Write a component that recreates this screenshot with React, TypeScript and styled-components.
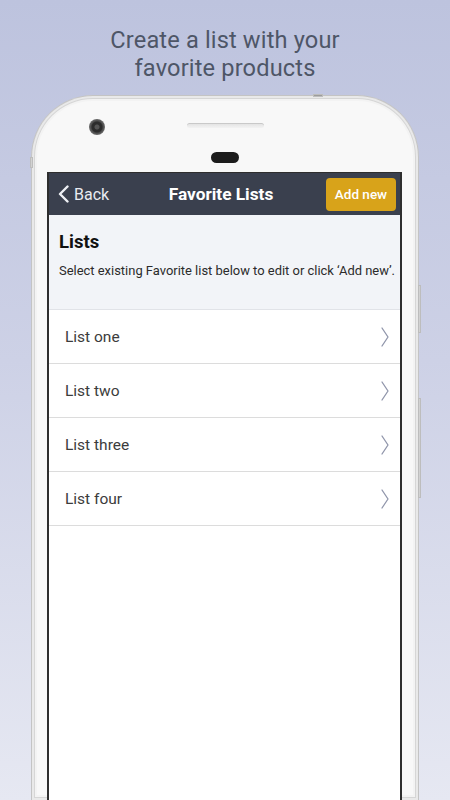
import React from "react";
import styled, { createGlobalStyle } from "styled-components";

const Global = createGlobalStyle`
  html, body { margin: 0; padding: 0; }
  body { font-family: Roboto, "Liberation Sans", Arial, sans-serif; }
  * { box-sizing: border-box; }
`;

const Page = styled.div`
  width: 450px;
  height: 800px;
  overflow: hidden;
  background: linear-gradient(180deg, #bdc3de 0%, #cdd1e6 45%, #e6e8f2 100%);
  display: flex;
  flex-direction: column;
`;

const Title = styled.h1`
  margin: 0;
  padding-top: 26px;
  font-family: Roboto, "Liberation Sans", sans-serif;
  font-weight: 400;
  font-size: 23.6px;
  letter-spacing: 0.15px;
  line-height: 28px;
  color: #4e5667;
  text-align: center;
`;

const Phone = styled.div`
  position: relative;
  margin: 13px 0 0 31px;
  width: 388px;
  flex: 1;
  background: #f8f8f8;
  border: 1px solid #c4c4c4;
  border-bottom: none;
  border-radius: 62px 62px 0 0;
  box-shadow: inset 0 0 0 2px #e9e9e9, inset 0 0 0 3px #d6d6d6, inset 0 0 0 5px #f3f3f3;
  display: flex;
  flex-direction: column;
`;

const SideKey = styled.span<{ $side: "left" | "right" | "top"; $at: number; $len: number }>`
  position: absolute;
  background: #d2d2d2;
  border: 1px solid #bdbdbd;
  ${(p) =>
    p.$side === "top"
      ? `top: -2px; left: ${p.$at}px; width: ${p.$len}px; height: 3px; background:#9c9c9c;`
      : p.$side === "left"
      ? `left: -2px; top: ${p.$at}px; height: ${p.$len}px; width: 3px;`
      : `right: -3px; top: ${p.$at}px; height: ${p.$len}px; width: 3px;`}
`;

const Bezel = styled.div`
  position: relative;
  height: 76px;
  display: flex;
  flex-direction: column;
  align-items: center;
`;

const Camera = styled.span`
  position: absolute;
  left: 57px;
  top: 23px;
  width: 16px;
  height: 16px;
  border-radius: 50%;
  background: radial-gradient(circle at 50% 50%, #555 0 2px, #2c2c2c 3px 5px, #4a4a4a 6px, #6d6d6d 8px);
`;

const Speaker = styled.span`
  margin-top: 27px;
  width: 77px;
  height: 5px;
  border-radius: 3px;
  border-top: 1.5px solid #c9c9c9;
  background: linear-gradient(180deg, #e4e4e4, #f3f3f3);
`;

const Sensor = styled.span`
  margin-top: 24px;
  width: 28px;
  height: 11px;
  border-radius: 6px;
  background: #1c1c1c;
`;

const Screen = styled.div`
  margin-left: 15px;
  width: 355px;
  flex: 1;
  background: #fff;
  border: 2px solid #2e2e2e;
  border-top-width: 1px;
  border-bottom: none;
  display: flex;
  flex-direction: column;
`;

const NavBar = styled.header`
  height: 42px;
  background: #3a404e;
  display: grid;
  grid-template-columns: 1fr auto 1fr;
  align-items: center;
  padding: 0 4px 0 9px;
`;

const BackButton = styled.div`
  display: flex;
  align-items: center;
  gap: 5px;
  color: #e9ebf1;
  font-size: 16px;
  justify-self: start;
`;

const NavTitle = styled.div`
  color: #fff;
  font-weight: 700;
  font-size: 17.3px;
  margin-right: 12px;
`;

const AddButton = styled.button`
  justify-self: end;
  width: 70px;
  height: 33px;
  border: none;
  border-radius: 4px;
  background: #d8a31a;
  color: #fff;
  font-family: Roboto, "Liberation Sans", sans-serif;
  font-weight: 500;
  font-size: 13.5px;
  padding: 0;
`;

const Intro = styled.section`
  background: #f2f4f8;
  height: 95px;
  padding: 16px 10px 0 10px;
  border-bottom: 1px solid #e1e3e8;
`;

const IntroHeading = styled.h2`
  margin: 0;
  font-size: 18.5px;
  line-height: 22px;
  font-weight: 700;
  color: #111;
`;

const IntroText = styled.p`
  margin: 10px 0 0;
  font-size: 12.95px;
  line-height: 16px;
  color: #2b2b2b;
  white-space: nowrap;
`;

const List = styled.ul`
  list-style: none;
  margin: 0;
  padding: 0;
`;

const Row = styled.li`
  height: 54px;
  border-bottom: 1px solid #dcdcdc;
  display: flex;
  align-items: center;
  justify-content: space-between;
  padding: 0 11px 0 16px;
  font-size: 15.5px;
  color: #3c3c3c;
`;

const Chevron = ({ color, w, h, sw }: { color: string; w: number; h: number; sw: number }) => (
  <svg width={w} height={h} viewBox={`0 0 ${w} ${h}`} fill="none">
    <path d={`M1 1 L${w - 1} ${h / 2} L1 ${h - 1}`} stroke={color} strokeWidth={sw} strokeLinecap="round" strokeLinejoin="round" />
  </svg>
);

const BackChevron = () => (
  <svg width="11" height="18" viewBox="0 0 11 18" fill="none">
    <path d="M9.5 1.5 L2 9 L9.5 16.5" stroke="#eef0f5" strokeWidth="2.4" strokeLinecap="round" strokeLinejoin="round" />
  </svg>
);

const lists = ["List one", "List two", "List three", "List four"];

export default function App() {
  return (
    <>
      <Global />
      <Page>
        <Title>
          Create a list with your
          <br />
          favorite products
        </Title>
        <Phone>
          <SideKey $side="top" $at={281} $len={10} />
          <SideKey $side="left" $at={61} $len={11} />
          <SideKey $side="right" $at={189} $len={48} />
          <SideKey $side="right" $at={302} $len={100} />
          <Bezel>
            <Camera />
            <Speaker />
            <Sensor />
          </Bezel>
          <Screen>
            <NavBar>
              <BackButton>
                <BackChevron />
                Back
              </BackButton>
              <NavTitle>Favorite Lists</NavTitle>
              <AddButton>Add new</AddButton>
            </NavBar>
            <Intro>
              <IntroHeading>Lists</IntroHeading>
              <IntroText>Select existing Favorite list below to edit or click ‘Add new’.</IntroText>
            </Intro>
            <List>
              {lists.map((l) => (
                <Row key={l}>
                  {l}
                  <Chevron color="#8f95aa" w={8} h={20} sw={1.3} />
                </Row>
              ))}
            </List>
          </Screen>
        </Phone>
      </Page>
    </>
  );
}
